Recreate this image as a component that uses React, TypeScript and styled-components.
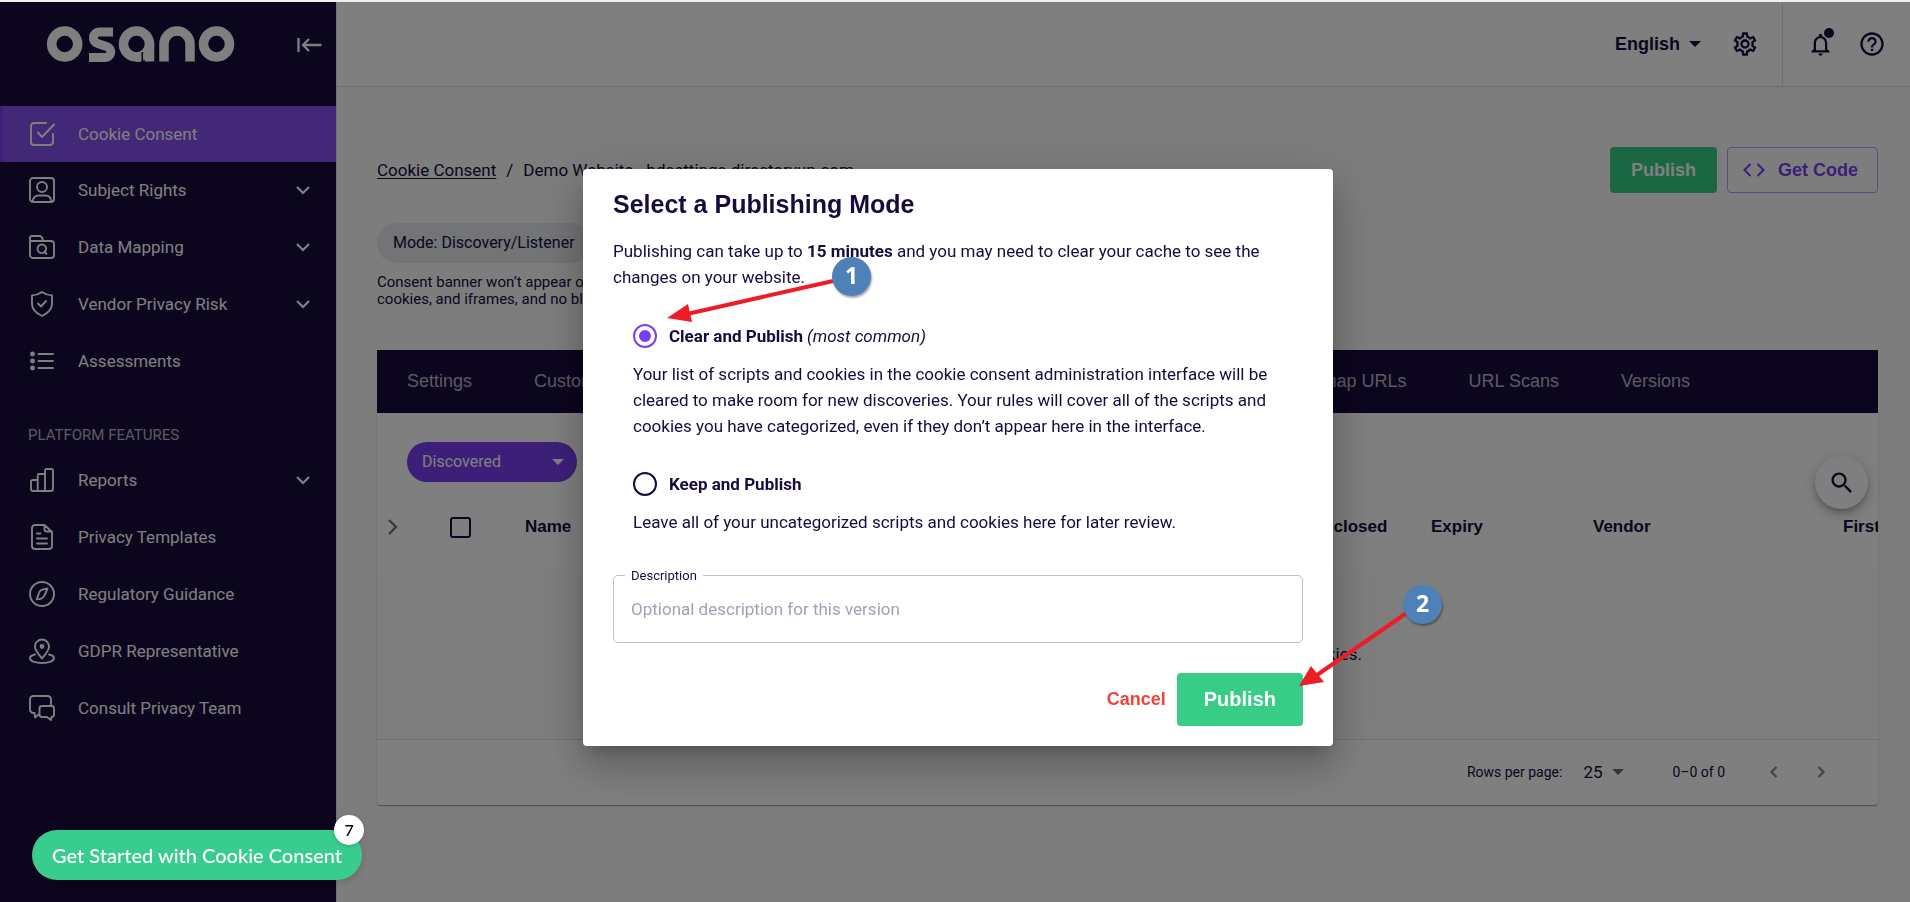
import React, { useState } from "react";
import styled, { createGlobalStyle, css } from "styled-components";

const NAVY = "#180a3d";
const PURPLE = "#7b3ff2";
const GREEN = "#37cd86";
const RED = "#ee1c25";
const HEAD_FONT = '"Liberation Sans", Arial, sans-serif';

const GlobalStyle = createGlobalStyle`
  *, *::before, *::after { box-sizing: border-box; }
  body {
    margin: 0;
    background: #fafafa;
    color: ${NAVY};
    font-family: Roboto, sans-serif;
    font-size: 17px;
    line-height: 26px;
  }
  button, input, select, textarea { font: inherit; color: inherit; }
  button { cursor: pointer; }
  p, h1, h2, ul { margin: 0; padding: 0; }
`;

const Shell = styled.div`
  display: grid;
  grid-template-columns: 336px minmax(0, 1fr);
  min-height: 100vh;
  border-top: 2px solid #f2eeee;
`;

/* ---------- Sidebar ---------- */

const Sidebar = styled.aside`
  background: ${NAVY};
  color: #fff;
`;

const SidebarHead = styled.div`
  display: flex;
  align-items: flex-start;
  justify-content: space-between;
  height: 104px;
  padding: 24px 15px 0 47px;
`;

const IconButton = styled.button`
  display: inline-flex;
  align-items: center;
  justify-content: center;
  width: 24px;
  height: 24px;
  padding: 0;
  border: 0;
  background: none;
  position: relative;
  & > svg { flex: none; }
`;

const CollapseButton = styled(IconButton)`
  margin-top: 7px;
`;

const NavList = styled.ul`
  display: flex;
  flex-direction: column;
  list-style: none;
`;

const NavItem = styled.li<{ $expandable?: boolean }>`
  margin-bottom: ${(p) => (p.$expandable ? 1 : 0)}px;
`;

const FeatureList = styled(NavList)`
  gap: 1px;
  ${NavItem} { margin: 0; }
`;

const NavLink = styled.a<{ $active?: boolean }>`
  display: flex;
  align-items: center;
  height: 56px;
  padding: 0 21px 1px 26px;
  border-left: 3px solid transparent;
  color: #fff;
  text-decoration: none;
  ${(p) =>
    p.$active &&
    css`
      background: #8850f0;
      border-left-color: ${PURPLE};
    `}
  & > span {
    flex: 1;
    margin-left: 23px;
  }
`;

const NavHeading = styled.h2`
  padding: 32px 28px 3px;
  color: rgba(255, 255, 255, 0.7);
  font-size: 15px;
  font-weight: 400;
  line-height: 28px;
`;

/* ---------- Main column ---------- */

const Main = styled.main`
  border-left: 1px solid #e4e4e8;
`;

const TopBar = styled.header`
  display: flex;
  justify-content: flex-end;
  height: 85px;
  background: #fff;
  border-bottom: 1px solid #dedee2;
`;

const TopGroup = styled.div<{ $divided?: boolean }>`
  display: flex;
  align-items: center;
  gap: 28px;
  padding: 0 25px;
  ${(p) => p.$divided && "padding-right: 26px; border-left: 1px solid #dedee2;"}
`;

const LanguageButton = styled.button`
  display: flex;
  align-items: center;
  gap: 9px;
  padding: 0;
  border: 0;
  background: none;
  font-family: ${HEAD_FONT};
  font-size: 18px;
  font-weight: 700;
  margin-right: 4px;
`;

const Dot = styled.span`
  position: absolute;
  top: -4px;
  right: -2px;
  width: 10px;
  height: 10px;
  border-radius: 50%;
  background: ${NAVY};
`;

const Content = styled.div`
  padding: 60px 32px 60px 40px;
`;

const TitleRow = styled.div`
  display: flex;
  align-items: center;
  justify-content: space-between;
`;

const Breadcrumb = styled.nav`
  display: flex;
  gap: 10px;
  a { color: inherit; text-underline-offset: 2px; }
`;

const Actions = styled.div`
  display: flex;
  gap: 10px;
`;

const Button = styled.button<{ $kind: "solid" | "outline" | "text"; $large?: boolean }>`
  display: inline-flex;
  align-items: center;
  justify-content: center;
  gap: 13px;
  height: 46px;
  padding: 0 21px;
  border: 0;
  border-radius: 4px;
  font-family: ${HEAD_FONT};
  font-size: 18px;
  font-weight: 700;
  ${(p) => p.$kind === "solid" && `background: ${GREEN}; color: #fff;`}
  ${(p) => p.$kind === "outline" && `background: none; color: ${PURPLE}; border: 1px solid #b89bf5; padding: 0 19px 0 15px;`}
  ${(p) => p.$kind === "text" && "background: none; color: #f44336; padding: 0 11px;"}
  ${(p) => p.$large && "height: 53px; padding: 0 27px; font-size: 20px;"}
`;

const ModeChip = styled.div`
  display: inline-flex;
  align-items: center;
  height: 40px;
  margin-top: 30px;
  padding: 0 16px;
  border-radius: 20px;
  background: #e4e8ec;
  font-size: 16px;
`;

const ModeNote = styled.p`
  width: 560px;
  margin-top: 11px;
  font-size: 15px;
  line-height: 17px;
`;

const Panel = styled.section`
  margin-top: 42px;
`;

const TabBar = styled.nav`
  display: flex;
  height: 63px;
  padding-right: 156px;
  background: ${NAVY};
  overflow: hidden;
`;

const TabGroup = styled.div<{ $grow?: boolean }>`
  display: flex;
  flex: ${(p) => (p.$grow ? "1 1 0" : "none")};
  min-width: 0;
  overflow: hidden;
`;

const Tab = styled.a`
  display: flex;
  align-items: center;
  padding: 0 32px 2px 30px;
  color: rgba(255, 255, 255, 0.7);
  font-family: ${HEAD_FONT};
  font-size: 18px;
  text-decoration: none;
  white-space: nowrap;
`;

const Card = styled.div`
  position: relative;
  background: #fff;
  border-radius: 0 0 4px 4px;
  box-shadow: 0 2px 1px -1px rgba(0, 0, 0, 0.2), 0 1px 1px rgba(0, 0, 0, 0.14), 0 1px 3px rgba(0, 0, 0, 0.12);
`;

const Toolbar = styled.div`
  display: flex;
  padding: 29px 30px 0;
`;

const FilterBox = styled.div`
  display: grid;
  align-items: center;
  & > * { grid-area: 1 / 1; }
  & > svg { justify-self: end; margin-right: 13px; pointer-events: none; color: #fff; }
`;

const FilterSelect = styled.select`
  appearance: none;
  width: 170px;
  height: 40px;
  padding: 0 15px;
  border: 0;
  border-radius: 20px;
  background: ${PURPLE};
  color: #fff;
  font-size: 16px;
`;

const SearchFab = styled.button`
  position: absolute;
  top: 43px;
  right: 10px;
  display: flex;
  align-items: center;
  justify-content: center;
  width: 53px;
  height: 53px;
  border: 0;
  border-radius: 50%;
  background: #fff;
  box-shadow: 0 3px 5px -1px rgba(0, 0, 0, 0.2), 0 6px 10px rgba(0, 0, 0, 0.14), 0 1px 18px rgba(0, 0, 0, 0.12);
`;

const TableWrap = styled.div`
  overflow: hidden;
`;

const Table = styled.table`
  width: 1650px;
  table-layout: fixed;
  border-collapse: collapse;
  th {
    height: 90px;
    padding: 0 0 0 20px;
    border-bottom: 1px solid #f8f8f8;
    font-family: ${HEAD_FONT};
    font-weight: 700;
    text-align: left;
  }
  th:first-child { padding-left: 3px; color: #757575; }
  th > * { vertical-align: middle; }
  td {
    height: 167px;
    padding: 0 0 4px;
    background: #fdfdfd;
    border-bottom: 1px solid #e2e2e4;
    text-align: center;
  }
`;

const CheckBox = styled.input`
  appearance: none;
  width: 21px;
  height: 21px;
  margin: 0;
  border: 2px solid ${NAVY};
  border-radius: 3px;
`;

const Pagination = styled.div`
  display: flex;
  align-items: center;
  justify-content: flex-end;
  height: 65px;
  padding-right: 45px;
  font-size: 14px;
`;

const PageSize = styled.label`
  display: flex;
  align-items: center;
  gap: 21px;
  margin-right: 48px;
`;

const PageSizeBox = styled.span`
  display: grid;
  align-items: center;
  width: 41px;
  & > * { grid-area: 1 / 1; }
  & > svg { justify-self: end; pointer-events: none; color: #6c6c74; }
`;

const PageSizeSelect = styled.select`
  appearance: none;
  width: 100%;
  padding: 0;
  border: 0;
  background: none;
  font-size: 17px;
`;

const Pager = styled.div`
  display: flex;
  gap: 23px;
  margin-left: 37px;
  color: #8b849e;
`;

/* ---------- Dialog ---------- */

const Backdrop = styled.div`
  position: fixed;
  inset: 2px 0 0;
  display: flex;
  align-items: center;
  justify-content: center;
  padding: 10px 0 0 6px;
  background: rgba(0, 0, 0, 0.5);
`;

const Dialog = styled.form`
  position: relative;
  width: 750px;
  padding: 20px 30px;
  border-radius: 4px;
  background: #fff;
  box-shadow: 0 11px 15px -7px rgba(0, 0, 0, 0.2), 0 24px 38px 3px rgba(0, 0, 0, 0.14), 0 9px 46px 8px rgba(0, 0, 0, 0.12);
`;

const DialogTitle = styled.h1`
  font-family: ${HEAD_FONT};
  font-size: 25px;
  font-weight: 700;
  line-height: 30px;
`;

const Intro = styled.p`
  margin-top: 19px;
`;

const Options = styled.div`
  display: flex;
  flex-direction: column;
  gap: 32px;
  margin: 33px 20px 0;
`;

const OptionLabel = styled.label`
  display: flex;
  align-items: center;
  gap: 4px;
  margin-bottom: 12px;
  cursor: pointer;
`;

const Radio = styled.input`
  appearance: none;
  display: grid;
  place-items: center;
  width: 24px;
  height: 24px;
  margin: 0 8px 0 0;
  border: 2px solid ${NAVY};
  border-radius: 50%;
  &:checked { border-color: ${PURPLE}; }
  &:checked::before {
    content: "";
    width: 12px;
    height: 12px;
    border-radius: 50%;
    background: ${PURPLE};
  }
`;

const Field = styled.fieldset`
  height: 74px;
  margin: 34px 0 0;
  padding: 0 17px;
  border: 1px solid #bfbfc4;
  border-radius: 5px;
  legend {
    height: 14px;
    padding: 0 6px;
    margin-left: -6px;
    font-size: 13px;
    line-height: 14px;
  }
`;

const FieldInput = styled.input`
  width: 100%;
  height: 52px;
  padding: 0;
  border: 0;
  outline: 0;
  background: none;
  &::placeholder { color: #a49fb5; opacity: 1; }
`;

const DialogActions = styled.div`
  display: flex;
  align-items: center;
  justify-content: flex-end;
  margin-top: 30px;
`;

const Markup = styled.svg`
  position: absolute;
  top: 0;
  left: 0;
  overflow: visible;
  pointer-events: none;
`;

const StepBadge = styled.span<{ $x: number; $y: number }>`
  position: absolute;
  left: ${(p) => p.$x}px;
  top: ${(p) => p.$y}px;
  width: 39px;
  height: 39px;
  border-radius: 50%;
  background: #4f81b9;
  box-shadow: 1px 2px 2px rgba(0, 0, 0, 0.35);
  color: #fff;
  font-family: "Open Sans", sans-serif;
  font-size: 23px;
  font-weight: 700;
  line-height: 37px;
  text-align: center;
`;

const GuideButton = styled.button`
  position: fixed;
  left: 32px;
  bottom: 22px;
  height: 50px;
  padding: 0 20px;
  border: 0;
  border-radius: 25px;
  background: #38cd8f;
  box-shadow: 0 2px 8px rgba(0, 0, 0, 0.15);
  color: #fff;
  font-family: Lato, sans-serif;
  font-size: 20px;
  font-weight: 500;
  white-space: nowrap;
`;

const GuideCount = styled.span`
  position: absolute;
  top: -15px;
  right: -2px;
  width: 30px;
  height: 30px;
  border-radius: 50%;
  background: #fff;
  box-shadow: 0 1px 4px rgba(0, 0, 0, 0.2);
  color: #000;
  font-size: 16px;
  line-height: 29px;
`;

/* ---------- Drawings ---------- */

const Glyph = ({ children, size = 26 }: { children: React.ReactNode; size?: number }) => (
  <svg
    width={size}
    height={size}
    viewBox="0 0 26 26"
    fill="none"
    stroke="currentColor"
    strokeWidth="1.9"
    strokeLinecap="round"
    strokeLinejoin="round"
    aria-hidden="true"
  >
    {children}
  </svg>
);

const Logo = () => (
  <svg width="188" height="37" viewBox="0 0 188 37" role="img" aria-label="Osano" fill="none" stroke="#fff" strokeWidth="9.5">
    <circle cx="17.7" cy="18" r="13" />
    <path d="M66 6H52.500a5.900 5.900 0 0 0-2 11.500L59.500 20.500a5.600 5.600 0 0 1-2 11H42" strokeWidth="9" />
    <circle cx="89.500" cy="18" r="13" />
    <path d="M102.500 35.500V18M89.500 31h5" />
    <path d="M95.300 26v11" stroke={NAVY} strokeWidth="1.6" />
    <path d="M117 35.500V18a13 13 0 0 1 26 0v17.500" />
    <circle cx="169.500" cy="18" r="13" />
  </svg>
);

const CollapseIcon = () => (
  <svg width="25" height="16" viewBox="0 0 25 16" fill="none" stroke="#fff" strokeWidth="2.300">
    <path d="M1.500 1v14M24.500 8H6M12 2 6 8l6 6" />
  </svg>
);

const Caret = () => (
  <svg width="12" height="6" viewBox="0 0 12 6" aria-hidden="true">
    <path d="M0 0h12L6 6z" fill="currentColor" />
  </svg>
);

const Chevron = ({ d, width = 2.2 }: { d: string; width?: number }) => (
  <svg width="24" height="24" viewBox="0 0 24 24" fill="none" stroke="currentColor" strokeWidth={width} aria-hidden="true">
    <path d={d} />
  </svg>
);
const DOWN = "M6 9l6 6 6-6";
const RIGHT = "M9 5l7 7-7 7";
const SMALL_RIGHT = "M9.500 7l5 5-5 5";
const SMALL_LEFT = "M14.500 7l-5 5 5 5";

const icons: Record<string, React.ReactNode> = {
  consent: <Glyph><path d="M17 2H5a3 3 0 0 0-3 3v16a3 3 0 0 0 3 3h16a3 3 0 0 0 3-3v-8" /><path d="M9 11.500l4 4.500L25 3.500" /></Glyph>,
  rights: <Glyph><rect x="1" y="1" width="24" height="24" rx="3" /><circle cx="13" cy="10" r="5" /><path d="M3.500 24.500c.6-4 3-6 6-6h7c3 0 5.400 2 6 6" /></Glyph>,
  mapping: <Glyph><path d="M1 21V4a2 2 0 0 1 2-2h7.500c2 0 2.500 1 3 3l.5 2M1 7h21a3 3 0 0 1 3 3v11a3 3 0 0 1-3 3H4a3 3 0 0 1-3-3z" /><circle cx="12.800" cy="14.800" r="4.300" /><path d="M15.500 17.500l2 2.300" /></Glyph>,
  vendor: <Glyph><path d="M13 1c3 2.200 6.500 3.200 10 3.400v8.600c0 5.200-4 9-10 12C7 22 3 18.200 3 13V4.400C6.500 4.200 10 3.200 13 1z" /><path d="M9 12.500l3 3 5-5.500" /></Glyph>,
  assess: <Glyph><path d="M9.500 6h14.500M9.500 13h14.500M9.500 20h14.500" /><g fill="currentColor"><circle cx="3.500" cy="6" r="1.500" /><circle cx="3.500" cy="13" r="1.500" /><circle cx="3.500" cy="20" r="1.500" /></g></Glyph>,
  reports: <Glyph><path d="M2 22V14a2 2 0 0 1 2-1h4.700V8.500a1.500 1.500 0 0 1 1.500-1.500h5.800V3.500A1.500 1.500 0 0 1 17.500 2h5A1.500 1.500 0 0 1 24 3.500V22a2 2 0 0 1-2 2H4a2 2 0 0 1-2-2zM8.700 13v11M16 7v17" /></Glyph>,
  templates: <Glyph><path d="M15 1H6a3 3 0 0 0-3 3v18a3 3 0 0 0 3 3h14a3 3 0 0 0 3-3V8l-7.500-7v4.500a2 2 0 0 0 2 2H23M8 9.500h3.500M8 14.500h10M8 19.500h10" /></Glyph>,
  guidance: <Glyph><circle cx="13" cy="13" r="12" /><path d="M18.500 7.500c-5 .5-8 2-8.500 4.500l-2.300 6.300c4 0 7-1.300 8-4.300z" /></Glyph>,
  gdpr: <Glyph><path d="M13 20.500C9 16 6 12.500 6 8.500a7 7 0 0 1 14 0c0 4-3 7.500-7 12z" /><circle cx="13" cy="8.500" r="1.500" fill="currentColor" /><path d="M6 16.500c-3 .7-5 2-5 3.700C1 23 6 25 13 25s12-2 12-4.800c0-1.700-2-3-5-3.700" /></Glyph>,
  consult: <Glyph><path d="M9.500 19.500 6 22.500 5.500 18H4.500A3.500 3.500 0 0 1 1 14.500V4.500A3.500 3.500 0 0 1 4.500 1h14A3.500 3.500 0 0 1 22 4.500V11" /><path d="M13 11h9.500a2.500 2.500 0 0 1 2.500 2.500v6a2.500 2.500 0 0 1-2.500 2.500l-.5 3-4-3h-5a2.500 2.500 0 0 1-2.500-2.500v-6A2.500 2.500 0 0 1 13 11z" /></Glyph>,
};

const GearIcon = () => (
  <svg width="28" height="28" viewBox="0 0 24 24" fill="currentColor" aria-hidden="true">
    <path d="M19.430 12.980c.04-.32.070-.64.070-.98s-.03-.66-.07-.98l2.110-1.650c.19-.15.24-.42.12-.64l-2-3.460c-.09-.16-.26-.25-.44-.25-.06 0-.12.010-.17.030l-2.490 1c-.52-.4-1.080-.73-1.690-.98l-.38-2.650C14.460 2.180 14.250 2 14 2h-4c-.25 0-.46.180-.49.420l-.38 2.650c-.61.250-1.170.590-1.690.980l-2.490-1c-.06-.02-.12-.03-.18-.03-.17 0-.34.090-.43.250l-2 3.460c-.13.220-.07.490.12.640l2.110 1.650c-.04.320-.07.650-.07.980s.03.660.070.980l-2.110 1.650c-.19.150-.24.420-.12.640l2 3.460c.09.160.26.250.44.250.06 0 .12-.01.17-.03l2.490-1c.52.400 1.080.730 1.690.980l.38 2.650c.03.240.24.420.49.420h4c.25 0 .46-.18.490-.42l.38-2.650c.61-.25 1.170-.59 1.690-.98l2.490 1c.06.020.12.030.18.030.17 0 .34-.09.43-.25l2-3.460c.12-.22.070-.49-.12-.64l-2.110-1.650zm-1.980-1.710c.04.310.05.520.05.730 0 .21-.02.430-.05.730l-.14 1.130.89.700 1.080.840-.7 1.210-1.270-.51-1.040-.42-.9.680c-.43.320-.84.560-1.250.730l-1.060.430-.16 1.130-.2 1.350h-1.400l-.19-1.350-.16-1.130-1.060-.43c-.43-.18-.83-.41-1.230-.71l-.91-.7-1.060.430-1.270.510-.7-1.210 1.080-.84.890-.7-.14-1.130c-.03-.31-.05-.54-.05-.74s.02-.43.050-.73l.14-1.130-.89-.7-1.080-.84.700-1.210 1.270.510 1.040.420.900-.68c.43-.32.840-.56 1.250-.73l1.060-.43.160-1.130.2-1.350h1.390l.19 1.350.16 1.130 1.060.430c.43.180.83.410 1.230.710l.91.700 1.060-.43 1.270-.51.700 1.210-1.070.850-.89.700.14 1.130zM12 8c-2.210 0-4 1.790-4 4s1.790 4 4 4 4-1.790 4-4-1.790-4-4-4zm0 6c-1.100 0-2-.9-2-2s.9-2 2-2 2 .9 2 2-.9 2-2 2z" />
  </svg>
);

const BellIcon = () => (
  <svg width="27" height="27" viewBox="0 0 24 24" fill="currentColor" aria-hidden="true">
    <path d="M12 22c1.100 0 2-.9 2-2h-4c0 1.100.89 2 2 2zm6-6v-5c0-3.070-1.640-5.640-4.500-6.320V4c0-.83-.67-1.500-1.500-1.500s-1.500.67-1.500 1.500v.68C7.630 5.360 6 7.920 6 11v5l-2 2v1h16v-1l-2-2zm-2 1H8v-6c0-2.480 1.510-4.500 4-4.500s4 2.020 4 4.500v6z" />
  </svg>
);

const HelpIcon = () => (
  <svg width="28" height="28" viewBox="0 0 24 24" fill="currentColor" aria-hidden="true">
    <path d="M11 18h2v-2h-2v2zm1-16C6.480 2 2 6.480 2 12s4.480 10 10 10 10-4.480 10-10S17.520 2 12 2zm0 18c-4.410 0-8-3.590-8-8s3.590-8 8-8 8 3.590 8 8-3.590 8-8 8zm0-14c-2.210 0-4 1.790-4 4h2c0-1.100.9-2 2-2s2 .9 2 2c0 2-3 1.750-3 5h2c0-2.250 3-2.500 3-5 0-2.210-1.790-4-4-4z" />
  </svg>
);

const CodeIcon = () => (
  <svg width="22" height="14" viewBox="0 0 22 14" fill="none" stroke="currentColor" strokeWidth="2" aria-hidden="true">
    <path d="M7.500 1l-6 6 6 6M14.500 1l6 6-6 6" />
  </svg>
);

const SearchIcon = () => (
  <svg width="28" height="28" viewBox="0 0 24 24" fill="currentColor" aria-hidden="true">
    <path d="M15.500 14h-.79l-.28-.27C15.410 12.590 16 11.110 16 9.500 16 5.910 13.090 3 9.500 3S3 5.910 3 9.500 5.910 16 9.500 16c1.610 0 3.090-.59 4.230-1.570l.27.280v.79l5 4.990L20.490 19l-4.990-5zm-6 0C7.010 14 5 11.990 5 9.500S7.010 5 9.500 5 14 7.010 14 9.500 11.990 14 9.500 14z" />
  </svg>
);

/* ---------- Data ---------- */

type NavEntry = { icon: string; label: string; active?: boolean; expandable?: boolean };

const products: NavEntry[] = [
  { icon: "consent", label: "Cookie Consent", active: true },
  { icon: "rights", label: "Subject Rights", expandable: true },
  { icon: "mapping", label: "Data Mapping", expandable: true },
  { icon: "vendor", label: "Vendor Privacy Risk", expandable: true },
  { icon: "assess", label: "Assessments" },
];

const features: NavEntry[] = [
  { icon: "reports", label: "Reports", expandable: true },
  { icon: "templates", label: "Privacy Templates" },
  { icon: "guidance", label: "Regulatory Guidance" },
  { icon: "gdpr", label: "GDPR Representative" },
  { icon: "consult", label: "Consult Privacy Team" },
];

const NavEntryRow = ({ entry }: { entry: NavEntry }) => (
  <NavItem $expandable={entry.expandable}>
    <NavLink href="#" $active={entry.active}>
      {icons[entry.icon]}
      <span>{entry.label}</span>
      {entry.expandable && <Chevron d={DOWN} />}
    </NavLink>
  </NavItem>
);

export default function App() {
  const [mode, setMode] = useState("clear");
  return (
    <>
      <GlobalStyle />
      <Shell>
        <Sidebar>
          <SidebarHead>
            <Logo />
            <CollapseButton aria-label="Collapse menu"><CollapseIcon /></CollapseButton>
          </SidebarHead>
          <NavList>{products.map((e) => <NavEntryRow key={e.label} entry={e} />)}</NavList>
          <NavHeading>PLATFORM FEATURES</NavHeading>
          <FeatureList>{features.map((e) => <NavEntryRow key={e.label} entry={e} />)}</FeatureList>
        </Sidebar>

        <Main>
          <TopBar>
            <TopGroup>
              <LanguageButton>English <Caret /></LanguageButton>
              <IconButton aria-label="Settings"><GearIcon /></IconButton>
            </TopGroup>
            <TopGroup $divided>
              <IconButton aria-label="Notifications"><BellIcon /><Dot /></IconButton>
              <IconButton aria-label="Help"><HelpIcon /></IconButton>
            </TopGroup>
          </TopBar>

          <Content>
            <TitleRow>
              <Breadcrumb aria-label="Breadcrumb">
                <a href="#">Cookie Consent</a>
                <span>/</span>
                <span>Demo Website - bdsettings.directoryup.com</span>
              </Breadcrumb>
              <Actions>
                <Button $kind="solid">Publish</Button>
                <Button $kind="outline"><CodeIcon />Get Code</Button>
              </Actions>
            </TitleRow>
            <ModeChip>Mode: Discovery/Listener</ModeChip>
            <ModeNote>
              Consent banner won’t appear on your website. We discover scripts,
              <br />
              cookies, and iframes, and no blocking takes place.
            </ModeNote>

            <Panel>
              <TabBar>
                <TabGroup $grow>
                  <Tab href="#">Settings</Tab>
                  <Tab href="#">Customization</Tab>
                  <Tab href="#">Scripts</Tab>
                  <Tab href="#">Cookies</Tab>
                  <Tab href="#">iFrames</Tab>
                </TabGroup>
                <TabGroup>
                  <Tab href="#">Sitemap URLs</Tab>
                  <Tab href="#">URL Scans</Tab>
                  <Tab href="#">Versions</Tab>
                </TabGroup>
              </TabBar>
              <Card>
                <Toolbar>
                  <FilterBox>
                    <FilterSelect aria-label="Filter"><option>Discovered</option></FilterSelect>
                    <Caret />
                  </FilterBox>
                </Toolbar>
                <TableWrap>
                  <Table>
                    <colgroup>
                      <col width="53" /><col width="75" /><col width="395" /><col width="387" />
                      <col width="124" /><col width="162" /><col width="250" /><col />
                    </colgroup>
                    <thead>
                      <tr>
                        <th><IconButton aria-label="Expand all"><Chevron d={RIGHT} width={2.4} /></IconButton></th>
                        <th><CheckBox type="checkbox" aria-label="Select all" /></th>
                        <th>Name</th>
                        <th>Category</th>
                        <th>Disclosed</th>
                        <th>Expiry</th>
                        <th>Vendor</th>
                        <th>First Found</th>
                      </tr>
                    </thead>
                    <tbody>
                      <tr><td colSpan={8}>You don’t have any uncategorized cookies.</td></tr>
                    </tbody>
                  </Table>
                </TableWrap>
                <Pagination>
                  <PageSize>
                    Rows per page:
                    <PageSizeBox>
                      <PageSizeSelect><option>25</option></PageSizeSelect>
                      <Caret />
                    </PageSizeBox>
                  </PageSize>
                  <span>0–0 of 0</span>
                  <Pager>
                    <IconButton aria-label="Previous page"><Chevron d={SMALL_LEFT} /></IconButton>
                    <IconButton aria-label="Next page"><Chevron d={SMALL_RIGHT} /></IconButton>
                  </Pager>
                </Pagination>
                <SearchFab aria-label="Search"><SearchIcon /></SearchFab>
              </Card>
            </Panel>
          </Content>
        </Main>
      </Shell>

      <Backdrop>
        <Dialog role="dialog" aria-labelledby="publish-title" onSubmit={(e) => e.preventDefault()}>
          <DialogTitle id="publish-title">Select a Publishing Mode</DialogTitle>
          <Intro>
            Publishing can take up to <b>15 minutes</b> and you may need to clear your cache to see the changes on
            your website.
          </Intro>
          <Options>
            <div>
              <OptionLabel>
                <Radio type="radio" name="mode" checked={mode === "clear"} onChange={() => setMode("clear")} />
                <b>Clear and Publish</b> <i>(most common)</i>
              </OptionLabel>
              <p>
                Your list of scripts and cookies in the cookie consent administration interface will be cleared to
                make room for new discoveries. Your rules will cover all of the scripts and cookies you have
                categorized, even if they don’t appear here in the interface.
              </p>
            </div>
            <div>
              <OptionLabel>
                <Radio type="radio" name="mode" checked={mode === "keep"} onChange={() => setMode("keep")} />
                <b>Keep and Publish</b>
              </OptionLabel>
              <p>Leave all of your uncategorized scripts and cookies here for later review.</p>
            </div>
          </Options>
          <Field>
            <legend><label htmlFor="description">Description</label></legend>
            <FieldInput id="description" placeholder="Optional description for this version" />
          </Field>
          <DialogActions>
            <Button type="button" $kind="text">Cancel</Button>
            <Button $kind="solid" $large>Publish</Button>
          </DialogActions>
          <Markup width="750" height="578" aria-hidden="true">
            <g stroke={RED} strokeWidth="4" fill="none">
              <path d="M250 112 104 145M825 443 734 506" />
            </g>
            <g fill={RED}>
              <path d="M84 149 105 135 109 153zM716 517 728 497 741 513z" />
            </g>
          </Markup>
          <StepBadge $x={249} $y={88}>1</StepBadge>
          <StepBadge $x={820} $y={416}>2</StepBadge>
        </Dialog>
      </Backdrop>

      <GuideButton>
        Get Started with Cookie Consent
        <GuideCount>7</GuideCount>
      </GuideButton>
    </>
  );
}
